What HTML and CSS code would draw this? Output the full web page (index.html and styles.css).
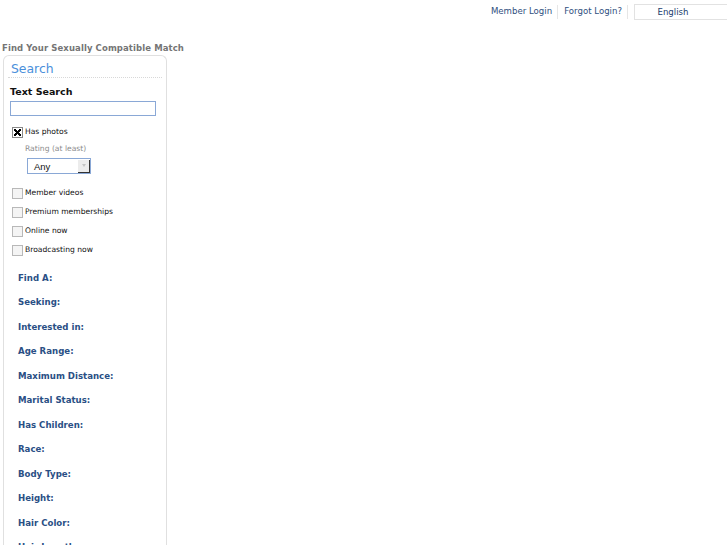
FILE: index.html
```html
<!DOCTYPE html>
<html>
<head>
<meta charset="utf-8">
<link rel="stylesheet" href="styles.css">
</head>
<body>
<div class="topbar">
  <a class="toplink" href="#">Member Login</a>
  <span class="sep"></span>
  <a class="toplink" href="#">Forgot Login?</a>
  <span class="sep"></span>
  <div class="lang">English</div>
</div>
<h1 class="tagline">Find Your Sexually Compatible Match</h1>
<div class="panel">
  <div class="panel-title">Search</div>
  <div class="panel-body">
    <div class="ts-label">Text Search</div>
    <input class="ts-input" type="text">
    <div class="check-row first"><span class="cb checked"></span><span class="cb-label">Has photos</span></div>
    <div class="rating">
      <div class="rating-label">Rating (at least)</div>
      <div class="select"><span class="select-val">Any</span><span class="select-btn"><span class="arrow"></span></span></div>
    </div>
    <div class="check-row"><span class="cb"></span><span class="cb-label">Member videos</span></div>
    <div class="check-row"><span class="cb"></span><span class="cb-label">Premium memberships</span></div>
    <div class="check-row"><span class="cb"></span><span class="cb-label">Online now</span></div>
    <div class="check-row"><span class="cb"></span><span class="cb-label">Broadcasting now</span></div>
    <ul class="fields">
      <li>Find A:</li>
      <li>Seeking:</li>
      <li>Interested in:</li>
      <li>Age Range:</li>
      <li>Maximum Distance:</li>
      <li>Marital Status:</li>
      <li>Has Children:</li>
      <li>Race:</li>
      <li>Body Type:</li>
      <li>Height:</li>
      <li>Hair Color:</li>
      <li>Hair Length:</li>
    </ul>
  </div>
</div>
</body>
</html>
```
FILE: styles.css
```css
html, body {
  margin: 0;
  padding: 0;
  background: #fff;
  font-family: "DejaVu Sans", Verdana, sans-serif;
  overflow: hidden;
  height: 545px;
}
.topbar {
  display: flex;
  justify-content: flex-end;
  align-items: center;
  height: 21px;
  padding-top: 1px;
}
.toplink {
  font-size: 8.6px;
  color: #2f4f80;
  text-decoration: none;
  position: relative;
  top: -1px;
}
.sep {
  width: 1px;
  height: 14px;
  background: #e6e6e6;
  margin: 0 6px 0 5px;
}
.lang {
  width: 92px;
  height: 14px;
  border: 1px solid #e2e2e2;
  font-size: 8.6px;
  color: #1c3d6e;
  text-align: center;
  line-height: 14px;
  margin-left: 0;
  margin-right: -1px;
  box-sizing: content-box;
  text-indent: -16px;
}
.tagline {
  margin: 20px 0 0 2px;
  font-size: 8.5px;
  font-weight: bold;
  color: #757575;
  line-height: 12px;
  height: 12px;
  letter-spacing: 0.1px;
}
.panel {
  margin: 1px 0 0 3px;
  width: 162px;
  border: 1px solid #e0e0e0;
  border-bottom: none;
  border-radius: 6px 6px 0 0;
  height: 600px;
}
.panel-title {
  margin: 0 4px 0 4px;
  padding: 5px 0 0 3px;
  height: 16px;
  font-size: 12.4px;
  line-height: 15px;
  color: #4a8fdb;
  border-bottom: 1px dotted #d8d8d8;
}
.panel-body {
  padding: 8px 0 0 6px;
}
.ts-label {
  font-size: 9.5px;
  font-weight: bold;
  color: #111;
  line-height: 12px;
}
.ts-input {
  display: block;
  margin: 3px 0 0 0;
  width: 146px;
  height: 15px;
  box-sizing: border-box;
  border: 1px solid #8aa8d6;
  padding: 0;
}
.check-row {
  display: flex;
  align-items: center;
  margin-left: 2px;
  height: 19px;
}
.check-row.first {
  margin-top: 7px;
  height: 17px;
}
.cb {
  width: 9px;
  height: 9px;
  border: 1px solid #b8b8b8;
  background: #f4f4f4;
  margin-right: 2px;
  flex: none;
  position: relative;
  top: 1px;
}
.cb.checked {
  background: #fff;
  border-color: #888;
}
.cb.checked::after {
  content: "";
  position: absolute;
  left: 1px;
  top: 1px;
  width: 7px;
  height: 7px;
  background:
    linear-gradient(45deg, transparent 36%, #000 36%, #000 64%, transparent 64%),
    linear-gradient(-45deg, transparent 36%, #000 36%, #000 64%, transparent 64%);
}
.cb-label {
  font-size: 7.6px;
  color: #111;
}
.rating {
  padding-left: 15px;
  margin-bottom: 9px;
}
.rating-label {
  font-size: 7.6px;
  color: #8c8c8c;
  line-height: 10px;
  margin-top: 4px;
}
.select {
  margin-top: 4px;
  width: 62px;
  height: 14px;
  border: 1px solid #8aa8d6;
  display: flex;
  align-items: center;
  margin-left: 2px;
  justify-content: space-between;
}
.select-val {
  font-family: "Liberation Sans", Arial, sans-serif;
  font-size: 9.5px;
  color: #111;
  padding-left: 6px;
}
.select-btn {
  width: 12px;
  height: 13px;
  background: #ececec;
  border-right: 1px solid #333;
  border-bottom: 1px solid #333;
  box-sizing: border-box;
  display: flex;
  align-items: center;
  justify-content: center;
}
.arrow {
  width: 0;
  height: 0;
  border-left: 2.5px solid transparent;
  border-right: 2.5px solid transparent;
  border-top: 3px solid #c4c4c4;
}
.fields {
  list-style: none;
  margin: 12.5px 0 0 0;
  padding: 0 0 0 8px;
}
.fields li {
  font-size: 8.6px;
  font-weight: bold;
  color: #2a4f85;
  height: 24.5px;
  line-height: 12px;
}
```
